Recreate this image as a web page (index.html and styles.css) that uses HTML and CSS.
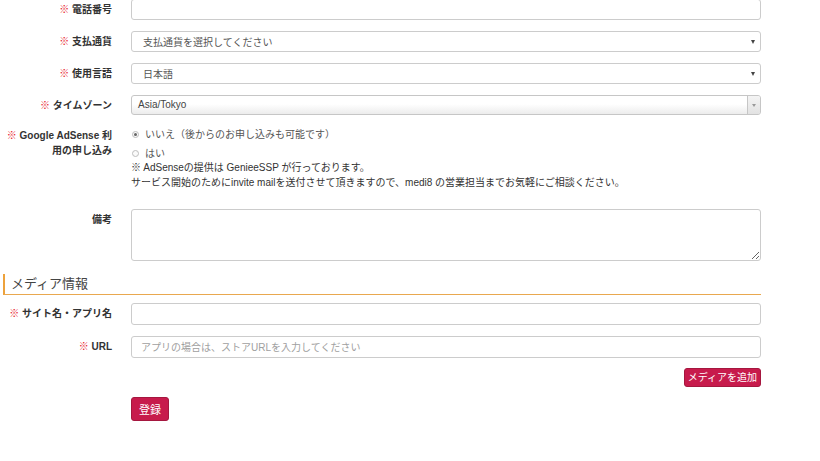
FILE: index.html
```html
<!DOCTYPE html>
<html lang="ja">
<head>
<meta charset="utf-8">
<title>Form</title>
<link rel="stylesheet" href="styles.css">
</head>
<body>
<div class="page">
  <div class="row">
    <label class="lbl"><span class="req">※</span> 電話番号</label>
    <div class="ctl"><input class="input" type="text"></div>
  </div>
  <div class="row">
    <label class="lbl"><span class="req">※</span> 支払通貨</label>
    <div class="ctl"><div class="select"><span>支払通貨を選択してください</span><span class="caret"></span></div></div>
  </div>
  <div class="row">
    <label class="lbl"><span class="req">※</span> 使用言語</label>
    <div class="ctl"><div class="select"><span>日本語</span><span class="caret"></span></div></div>
  </div>
  <div class="row">
    <label class="lbl"><span class="req">※</span> タイムゾーン</label>
    <div class="ctl"><div class="select2"><span class="s2text">Asia/Tokyo</span><span class="s2arrow"><span class="caret light"></span></span></div></div>
  </div>
  <div class="row row-adsense">
    <label class="lbl multi"><span class="req">※</span> Google AdSense 利<br>用の申し込み</label>
    <div class="ctl">
      <div class="radio-line first"><span class="radio checked"></span>いいえ（後からのお申し込みも可能です）</div>
      <div class="radio-line second"><span class="radio"></span>はい</div>
      <p class="note">※ AdSenseの提供は GenieeSSP が行っております。<br>サービス開始のためにinvite mailを送付させて頂きますので、medi8 の営業担当までお気軽にご相談ください。</p>
    </div>
  </div>
  <div class="row row-memo">
    <label class="lbl">備考</label>
    <div class="ctl"><textarea class="textarea"></textarea></div>
  </div>
  <h2 class="section">メディア情報</h2>
  <div class="row">
    <label class="lbl tall"><span class="req">※</span> サイト名・アプリ名</label>
    <div class="ctl"><input class="input tall" type="text"></div>
  </div>
  <div class="row row-url">
    <label class="lbl tall"><span class="req">※</span> URL</label>
    <div class="ctl"><input class="input tall" type="text" placeholder="アプリの場合は、ストアURLを入力してください"></div>
  </div>
  <div class="row row-add">
    <div></div>
    <div class="ctl right"><button class="btn btn-add" type="button">メディアを追加</button></div>
  </div>
  <div class="row">
    <div></div>
    <div class="ctl"><button class="btn btn-submit" type="submit">登録</button></div>
  </div>
</div>
</body>
</html>
```

FILE: styles.css
```css
* { box-sizing: border-box; }
html, body { margin: 0; padding: 0; background: #fff; }
body {
  font-family: "Liberation Sans", "Noto Sans CJK JP", sans-serif;
  font-size: 10px;
  color: #333;
}
.page { margin-top: -1px; }
.row {
  display: grid;
  grid-template-columns: 112px 630px;
  column-gap: 19px;
  margin-bottom: 11px;
}
.lbl {
  text-align: right;
  font-weight: bold;
  line-height: 21px;
  color: #333;
  white-space: nowrap;
}
.lbl.tall { line-height: 22px; }
.lbl.multi { line-height: 15px; padding-top: 1px; }
.req { color: #e8202a; }
.ctl { min-width: 0; }
.ctl.right { display: flex; justify-content: flex-end; }
.input {
  display: block;
  width: 100%;
  height: 21px;
  margin: 0;
  border: 1px solid #ccc;
  border-radius: 3px;
  padding: 0 9px;
  font: inherit;
  color: #555;
  background: #fff;
}
.input.tall { height: 22px; }
.input::placeholder { color: #a0a0a0; }
.select {
  display: flex;
  align-items: center;
  justify-content: space-between;
  height: 21px;
  border: 1px solid #ccc;
  border-radius: 3px;
  padding: 0 5px 0 11px;
  color: #555;
  background: #fff;
}
.caret {
  width: 0;
  height: 0;
  border-left: 2.5px solid transparent;
  border-right: 2.5px solid transparent;
  border-top: 4px solid #444;
}
.caret.light { border-top-color: #999; border-top-width: 3px; }
.select2 {
  display: flex;
  height: 20px;
  border: 1px solid #c6c6c6;
  border-radius: 3px;
  background: linear-gradient(#fff 45%, #ececec);
  overflow: hidden;
}
.s2text {
  flex: 1;
  padding-left: 6px;
  line-height: 18px;
  color: #444;
}
.s2arrow {
  width: 13px;
  border-left: 1px solid #c6c6c6;
  background: linear-gradient(#f4f4f4, #e2e2e2);
  display: flex;
  align-items: center;
  justify-content: center;
}
.radio-line {
  display: flex;
  align-items: center;
  color: #555;
  line-height: 15px;
}
.radio-line.second { margin-top: 5px; line-height: 13px; }
.radio {
  width: 7px;
  height: 7px;
  border: 1px solid #bdbdbd;
  border-radius: 50%;
  margin: 0 6px 0 1px;
  background: #fafafa;
  display: flex;
  align-items: center;
  justify-content: center;
}
.radio.checked::after {
  content: "";
  width: 3px;
  height: 3px;
  border-radius: 50%;
  background: #666;
}
.note {
  margin: 0;
  line-height: 15px;
  color: #333;
}
.row-adsense { margin-bottom: 19px; }
.textarea {
  display: block;
  width: 100%;
  height: 52px;
  margin: 0;
  border: 1px solid #ccc;
  border-radius: 3px;
  font: inherit;
  resize: vertical;
}
.row-memo { margin-bottom: 13px; }
.section {
  margin: 0 0 8px 3px;
  width: 758px;
  font-size: 13px;
  font-weight: normal;
  color: #444;
  line-height: 20px;
  padding-left: 6px;
  border-left: 2px solid #eda23c;
  border-bottom: 1px solid #e9a84f;
}
.row-url { margin-bottom: 10px; }
.row-add { margin-bottom: 10px; }
.btn {
  font-family: inherit;
  font-size: 10px;
  color: #fff;
  background: #c71b4c;
  border: 1px solid #a5173f;
  border-radius: 3px;
  cursor: pointer;
  margin: 0;
}
.btn-add { height: 19px; padding: 0 3px; line-height: 17px; }
.btn-submit { height: 24px; padding: 0 7px; font-size: 11px; }
```
